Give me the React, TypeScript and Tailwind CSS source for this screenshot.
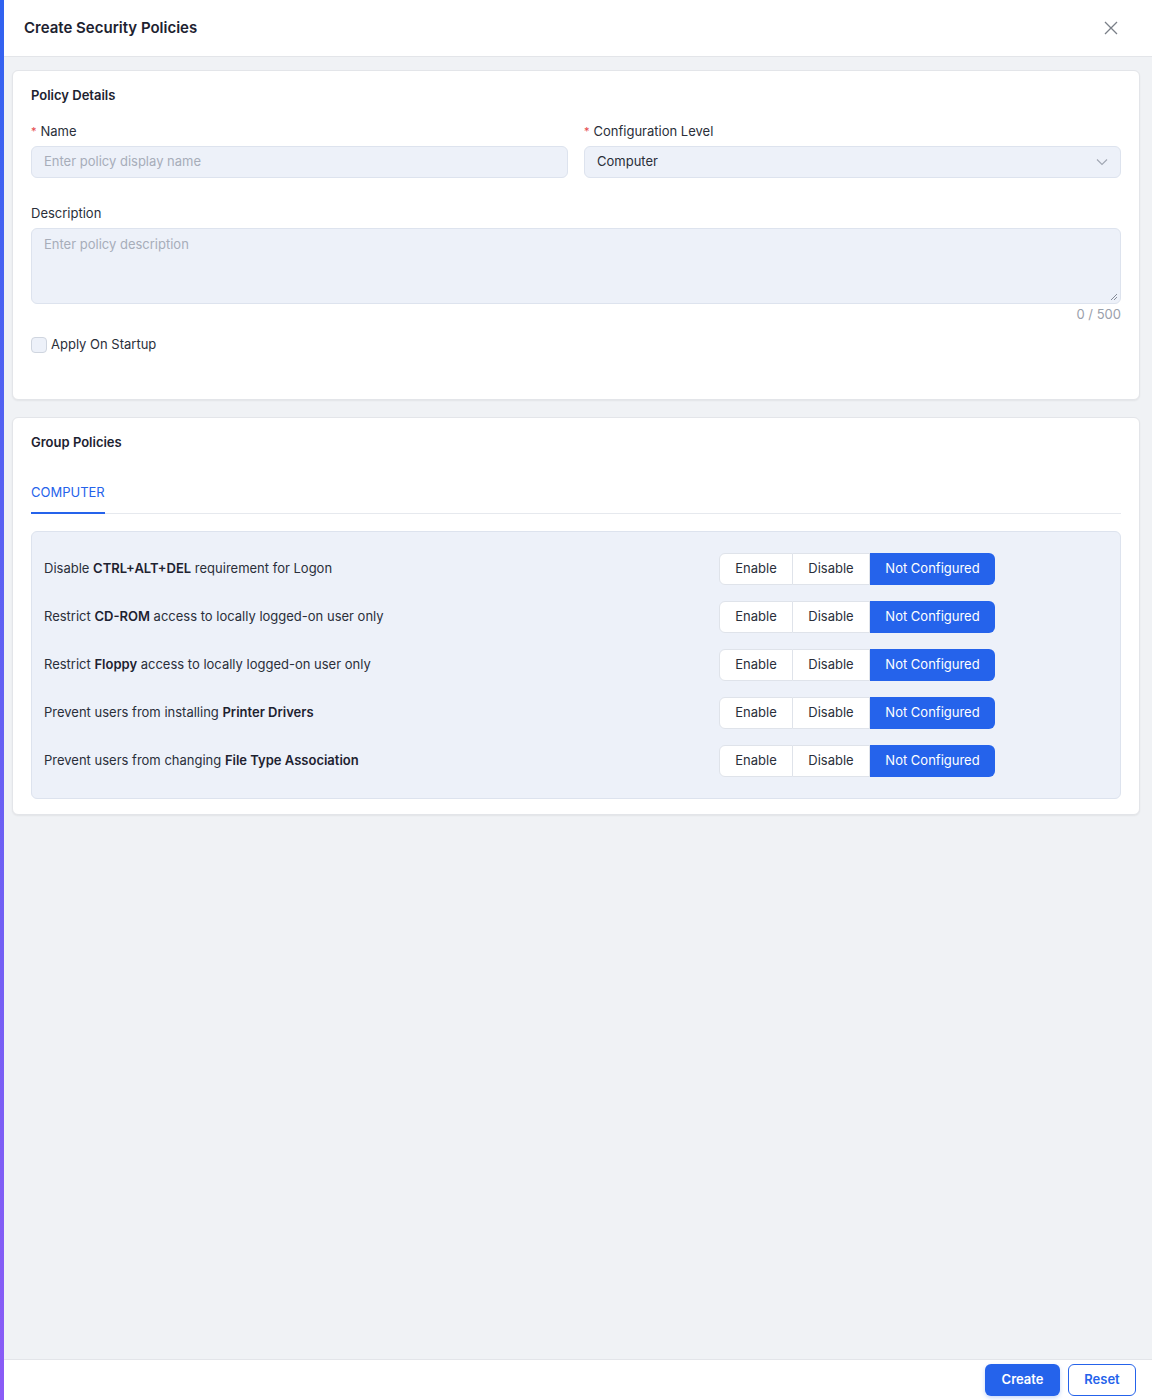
import React from "react";

const rows: { pre: string; bold: string; post: string }[] = [
  { pre: "Disable ", bold: "CTRL+ALT+DEL", post: " requirement for Logon" },
  { pre: "Restrict ", bold: "CD-ROM", post: " access to locally logged-on user only" },
  { pre: "Restrict ", bold: "Floppy", post: " access to locally logged-on user only" },
  { pre: "Prevent users from installing ", bold: "Printer Drivers", post: "" },
  { pre: "Prevent users from changing ", bold: "File Type Association", post: "" },
];

function Segmented() {
  return (
    <div className="flex h-8 text-[13px]">
      <div className="w-[74px] flex items-center justify-center bg-white border border-[#dfe3ea] rounded-l-[6px] text-[#2a2f3a]">Enable</div>
      <div className="w-[77px] flex items-center justify-center bg-white border-y border-r border-[#dfe3ea] text-[#2a2f3a]">Disable</div>
      <div className="w-[125px] flex items-center justify-center bg-[#2563eb] rounded-r-[6px] text-white">Not Configured</div>
    </div>
  );
}

export default function App() {
  return (
    <div className="flex h-[1400px] w-full bg-[#f0f2f5]" style={{ fontFamily: "Inter, 'Noto Sans', sans-serif" }}>
      <div className="w-1 shrink-0 bg-gradient-to-b from-[#2f62f0] to-[#8b5cf6]" />
      <div className="flex-1 flex flex-col min-w-0">
        <div className="h-[57px] shrink-0 bg-white border-b border-[#e3e5e9] flex items-center justify-between pl-5 pr-[34px]">
          <div className="text-[15px] font-semibold text-[#1d2230]">Create Security Policies</div>
          <svg width="14" height="14" viewBox="0 0 14 14" fill="none" stroke="#7a7f88" strokeWidth="1.3">
            <path d="M1 1 L13 13 M13 1 L1 13" />
          </svg>
        </div>
        <div className="flex-1 flex flex-col gap-[17px] pt-[13px] pl-2 pr-3">
          <div className="bg-white border border-[#e3e5e9] rounded-[6px] shadow-[0_1px_2px_rgba(0,0,0,0.06)] px-[18px] pt-[16px] h-[330px]">
            <div className="text-[13px] font-semibold text-[#1d2230] leading-4">Policy Details</div>
            <div className="grid grid-cols-2 gap-4 mt-[18px]">
              <div>
                <div className="text-[13px] text-[#2a2f3a] leading-5"><span className="text-[#e5484d] text-[11px] mr-1 align-top">*</span>Name</div>
                <div className="mt-[5px] h-8 rounded-[6px] bg-[#edf1f9] border border-[#dde3ee] flex items-center px-3 text-[13px] text-[#a7adb9]">Enter policy display name</div>
              </div>
              <div>
                <div className="text-[13px] text-[#2a2f3a] leading-5"><span className="text-[#e5484d] text-[11px] mr-1 align-top">*</span>Configuration Level</div>
                <div className="mt-[5px] h-8 rounded-[6px] bg-[#edf1f9] border border-[#dde3ee] flex items-center justify-between px-3 text-[13px] text-[#2a2f3a]">
                  <span>Computer</span>
                  <svg width="12" height="8" viewBox="0 0 12 8" fill="none" stroke="#a0a6b2" strokeWidth="1.1"><path d="M1 1.5 L6 6.5 L11 1.5" /></svg>
                </div>
              </div>
            </div>
            <div className="mt-[25px] text-[13px] text-[#2a2f3a] leading-5">Description</div>
            <div className="mt-[5px] h-[76px] rounded-[6px] bg-[#edf1f9] border border-[#dde3ee] px-3 pt-[6px] text-[13px] text-[#a7adb9] relative">
              Enter policy description
              <svg className="absolute right-[2px] bottom-[2px]" width="8" height="8" viewBox="0 0 8 8" stroke="#6b7280" strokeWidth="0.8"><path d="M7 1 L1 7 M7 4 L4 7" /></svg>
            </div>
            <div className="text-right text-[13px] text-[#9aa0ab] leading-5">0 / 500</div>
            <div className="flex items-center gap-[4px] mt-[11px]">
              <div className="w-4 h-4 rounded-[4px] border border-[#cfd5df] bg-[#edf1f9]" />
              <span className="text-[13px] text-[#2a2f3a]">Apply On Startup</span>
            </div>
          </div>
          <div className="bg-white border border-[#e3e5e9] rounded-[6px] shadow-[0_1px_2px_rgba(0,0,0,0.06)] px-[18px] pt-[16px] pb-[15px]">
            <div className="text-[13px] font-semibold text-[#1d2230] leading-4">Group Policies</div>
            <div className="mt-[32px] border-b border-[#e6e9ee] flex">
              <div className="text-[13px] text-[#2563eb] pb-[10px] border-b-2 border-[#2563eb] -mb-px leading-5">COMPUTER</div>
            </div>
            <div className="mt-[17px] bg-[#edf1f9] border border-[#dde3ee] rounded-[6px] px-3 py-[13px]">
              {rows.map((r, i) => (
                <div key={i} className="h-12 flex items-center">
                  <div className="w-[675px] text-[13px] text-[#2a2f3a]">
                    {r.pre}<b className="font-semibold text-[#1d2230]">{r.bold}</b>{r.post}
                  </div>
                  <Segmented />
                </div>
              ))}
            </div>
          </div>
        </div>
        <div className="h-[41px] shrink-0 bg-white border-t border-[#e3e5e9] flex items-center justify-end gap-2 pr-4">
          <button className="h-8 w-[75px] rounded-[6px] bg-[#2563eb] text-white text-[13px] font-semibold shadow-[0_2px_4px_rgba(37,99,235,0.25)]">Create</button>
          <button className="h-8 w-[68px] rounded-[6px] bg-white border border-[#2563eb] text-[#2563eb] text-[13px] font-semibold">Reset</button>
        </div>
      </div>
    </div>
  );
}
